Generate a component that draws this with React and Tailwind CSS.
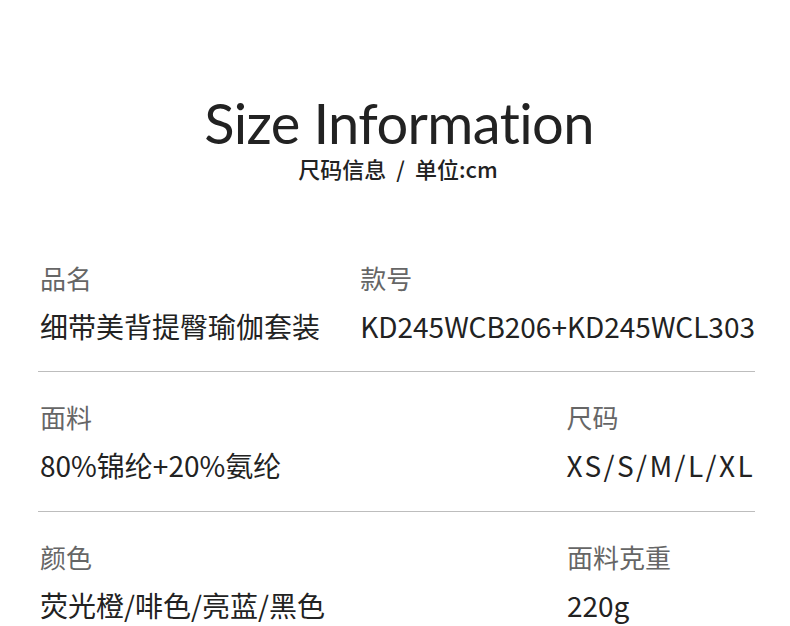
import React from "react";

const cjk = { fontFamily: '"Noto Sans CJK SC", "Noto Sans", sans-serif' };

function Field({ label, value, className = "", valueClass = "" }) {
  return (
    <div className={"flex flex-col " + className}>
      <div className="text-[26px] leading-[36px] text-[#666666]">{label}</div>
      <div className={"mt-[10px] text-[28px] leading-[40px] text-[#222222] " + valueClass}>{value}</div>
    </div>
  );
}

export default function App() {
  return (
    <div className="w-[790px] h-[626px] bg-white overflow-hidden" style={cjk}>
      <div className="pt-[91px] pl-[6px] flex flex-col items-center">
        <h1
          className="text-[56px] leading-[64px] text-[#222222] tracking-[-0.6px] pl-[2px]"
          style={{ fontFamily: '"Lato", "Liberation Sans", sans-serif' }}
        >
          Size Information
        </h1>
        <div className="text-[22px] leading-[26px] font-medium text-[#222222] flex">
          <span>尺码信息</span>
          <span className="mx-[10px]">/</span>
          <span>单位:cm</span>
        </div>
      </div>
      <div className="mt-[52px] ml-[38px] w-[717px]">
        <div className="flex pl-[2px] pt-[27px] pb-[25px] border-b border-[#bdbdbd]">
          <Field label="品名" value="细带美背提臀瑜伽套装" className="w-[322px]" />
          <Field label="款号" value="KD245WCB206+KD245WCL303" />
        </div>
        <div className="flex pl-[2px] pt-[27px] pb-[26px] border-b border-[#bdbdbd]">
          <Field label="面料" value="80%锦纶+20%氨纶" className="w-[527px]" />
          <Field label="尺码" value="XS/S/M/L/XL" valueClass="tracking-[2.4px]" />
        </div>
        <div className="flex pl-[2px] pt-[27px]">
          <Field label="颜色" value="荧光橙/啡色/亮蓝/黑色" className="w-[527px]" />
          <Field label="面料克重" value="220g" />
        </div>
      </div>
    </div>
  );
}
